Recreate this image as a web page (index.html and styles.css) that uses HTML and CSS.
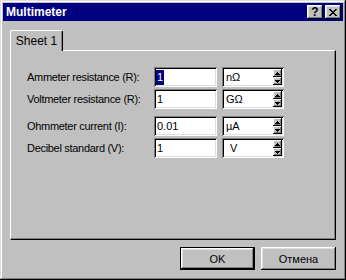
FILE: index.html
```html
<!DOCTYPE html>
<html lang="en">
<head>
  <meta charset="UTF-8" />
  <meta name="viewport" content="width=device-width, initial-scale=1.0" />
  <title>Multimeter</title>
  <link rel="stylesheet" href="styles.css">
</head>
<body>
  <div class="window">
    <div class="caption">
      <span class="caption-title">Multimeter</span>
      <div class="caption-btns">
        <button class="cap-btn help">?</button>
        <button class="cap-btn close">
          <svg width="8" height="7" viewBox="0 0 8 7" shape-rendering="crispEdges">
            <path d="M0 0h2v1H0zM6 0h2v1H6zM1 1h2v1H1zM5 1h2v1H5zM2 2h4v1H2zM3 3h2v1H3zM2 4h4v1H2zM1 5h2v1H1zM5 5h2v1H5zM0 6h2v1H0zM6 6h2v1H6z" fill="#000"/>
          </svg>
        </button>
      </div>
    </div>

    <div class="client">
      <div class="tabs">
        <div class="tab active">Sheet 1</div>
      </div>

      <div class="panel">
        <div class="fields">
          <div class="row">
            <label class="label">Ammeter resistance (R):</label>
            <div class="edit"><span class="sel">1</span></div>
            <div class="combo">
              <span class="combo-text">nΩ</span>
              <div class="spin">
                <div class="spin-btn"><svg width="5" height="3" viewBox="0 0 5 3" shape-rendering="crispEdges"><path d="M2 0h1v1H2zM1 1h3v1H1zM0 2h5v1H0z"/></svg></div>
                <div class="spin-btn"><svg width="5" height="3" viewBox="0 0 5 3" shape-rendering="crispEdges"><path d="M0 0h5v1H0zM1 1h3v1H1zM2 2h1v1H2z"/></svg></div>
              </div>
            </div>
          </div>

          <div class="row">
            <label class="label">Voltmeter resistance (R):</label>
            <div class="edit">1</div>
            <div class="combo">
              <span class="combo-text">GΩ</span>
              <div class="spin">
                <div class="spin-btn"><svg width="5" height="3" viewBox="0 0 5 3" shape-rendering="crispEdges"><path d="M2 0h1v1H2zM1 1h3v1H1zM0 2h5v1H0z"/></svg></div>
                <div class="spin-btn"><svg width="5" height="3" viewBox="0 0 5 3" shape-rendering="crispEdges"><path d="M0 0h5v1H0zM1 1h3v1H1zM2 2h1v1H2z"/></svg></div>
              </div>
            </div>
          </div>

          <div class="row group">
            <label class="label">Ohmmeter current (I):</label>
            <div class="edit">0.01</div>
            <div class="combo">
              <span class="combo-text">µA</span>
              <div class="spin">
                <div class="spin-btn"><svg width="5" height="3" viewBox="0 0 5 3" shape-rendering="crispEdges"><path d="M2 0h1v1H2zM1 1h3v1H1zM0 2h5v1H0z"/></svg></div>
                <div class="spin-btn"><svg width="5" height="3" viewBox="0 0 5 3" shape-rendering="crispEdges"><path d="M0 0h5v1H0zM1 1h3v1H1zM2 2h1v1H2z"/></svg></div>
              </div>
            </div>
          </div>

          <div class="row">
            <label class="label">Decibel standard (V):</label>
            <div class="edit">1</div>
            <div class="combo">
              <span class="combo-text indent">V</span>
              <div class="spin">
                <div class="spin-btn"><svg width="5" height="3" viewBox="0 0 5 3" shape-rendering="crispEdges"><path d="M2 0h1v1H2zM1 1h3v1H1zM0 2h5v1H0z"/></svg></div>
                <div class="spin-btn"><svg width="5" height="3" viewBox="0 0 5 3" shape-rendering="crispEdges"><path d="M0 0h5v1H0zM1 1h3v1H1zM2 2h1v1H2z"/></svg></div>
              </div>
            </div>
          </div>
        </div>
      </div>

      <div class="buttons">
        <button class="btn default">OK</button>
        <button class="btn">Отмена</button>
      </div>
    </div>
  </div>
</body>
</html>
```

FILE: styles.css
```css
body {
  margin: 0;
  background-color: #c0c0c0;
  font-family: "Liberation Sans", Arial, sans-serif;
  font-size: 11px;
  color: #000;
}

.window {
  width: 346px;
  height: 280px;
  box-sizing: border-box;
  padding: 3px;
  background-color: #c0c0c0;
  box-shadow: inset -1px -1px #000, inset 1px 1px #dfdfdf,
              inset -2px -2px #808080, inset 2px 2px #fff;
  display: flex;
  flex-direction: column;
}

.caption {
  height: 18px;
  flex-shrink: 0;
  margin-bottom: 1px;
  background-color: #000080;
  color: #fff;
  display: flex;
  align-items: center;
  padding-left: 3px;
}

.caption-title {
  font-weight: bold;
  font-size: 12px;
}

.caption-btns {
  margin-left: auto;
  margin-right: 2px;
  display: flex;
  gap: 2px;
}

.cap-btn {
  width: 16px;
  height: 14px;
  padding: 0;
  border: none;
  background-color: #c0c0c0;
  box-shadow: inset -1px -1px #000, inset 1px 1px #fff,
              inset -2px -2px #808080, inset 2px 2px #dfdfdf;
  display: flex;
  align-items: center;
  justify-content: center;
  font-family: "Liberation Sans", Arial, sans-serif;
  font-weight: bold;
  font-size: 12px;
  line-height: 1;
}

.cap-btn.help {
  padding-bottom: 1px;
}

.client {
  flex: 1;
  display: flex;
  flex-direction: column;
  padding: 8px 7px 7px;
}

.tabs {
  display: flex;
  height: 20px;
  flex-shrink: 0;
}

.tab {
  position: relative;
  z-index: 1;
  width: 53px;
  height: 21px;
  box-sizing: border-box;
  background-color: #c0c0c0;
  border-top: 1px solid #fff;
  border-left: 1px solid #fff;
  border-right: 1px solid #000;
  border-radius: 2px 2px 0 0;
  box-shadow: inset -1px 0 #808080;
  display: flex;
  align-items: center;
  justify-content: center;
  padding-bottom: 1px;
  font-size: 12px;
}

.panel {
  flex: 1;
  border: 1px solid;
  border-color: #fff #000 #000 #fff;
  box-shadow: inset -1px -1px #808080;
  padding: 16px 0 0 16px;
}

.fields {
  display: flex;
  flex-direction: column;
}

.row {
  display: flex;
  align-items: center;
  height: 20px;
}

.row + .row {
  margin-top: 2px;
}

.row.group {
  margin-top: 7px;
}

.label {
  width: 127px;
  letter-spacing: -0.3px;
}

.edit, .combo {
  height: 20px;
  box-sizing: border-box;
  background-color: #fff;
  box-shadow: inset 1px 1px #808080, inset -1px -1px #fff,
              inset 2px 2px #000, inset -2px -2px #dfdfdf;
}

.edit {
  width: 63px;
  padding: 2px 3px 2px 3px;
  line-height: 16px;
  margin-right: 5px;
}

.sel {
  display: inline-block;
  background-color: #000080;
  color: #fff;
  line-height: 15px;
  padding: 0 1px;
  margin-left: -1px;
}

.combo {
  width: 62px;
  display: flex;
  padding: 2px;
}

.combo-text {
  flex: 1;
  padding-left: 2px;
  line-height: 16px;
}

.combo-text.indent {
  padding-left: 6px;
}

.spin {
  width: 9px;
  display: flex;
  flex-direction: column;
}

.spin-btn {
  flex: 1;
  background-color: #c0c0c0;
  box-shadow: inset -1px -1px #000, inset 1px 1px #fff,
              inset -2px -2px #808080;
  display: flex;
  align-items: center;
  justify-content: center;
}

.buttons {
  display: flex;
  justify-content: flex-end;
  gap: 6px;
  margin-top: 7px;
  flex-shrink: 0;
}

.btn {
  width: 75px;
  height: 23px;
  padding: 0;
  border: none;
  background-color: #c0c0c0;
  font-family: "Liberation Sans", Arial, sans-serif;
  font-size: 11px;
  color: #000;
  box-shadow: inset -1px -1px #000, inset 1px 1px #fff,
              inset -2px -2px #808080, inset 2px 2px #dfdfdf;
}

.btn.default {
  box-shadow: inset 0 0 0 1px #000,
              inset -2px -2px #000, inset 2px 2px #fff,
              inset -3px -3px #808080, inset 3px 3px #dfdfdf;
}
```
